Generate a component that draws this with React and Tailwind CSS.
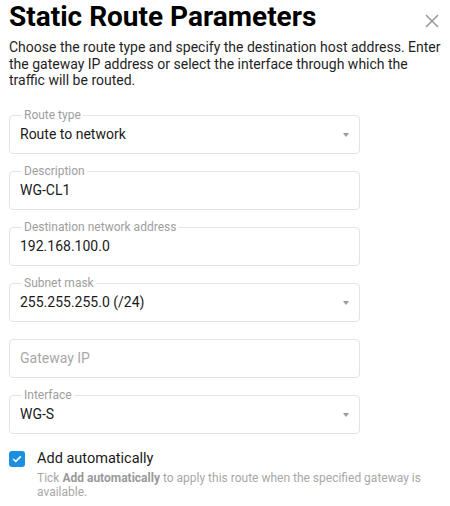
function Field({ label, value, placeholder, select }) {
  return (
    <div className="relative h-[39px] w-[351px] rounded-[4px] border border-[#e3e3e3] flex items-center pl-[10px] pr-[10px]">
      {label && (
        <span className="absolute left-[12px] top-[-9px] bg-white px-[2px] text-[12px] leading-[16px] text-[#9e9e9e]">
          {label}
        </span>
      )}
      {value ? (
        <span className="flex-1 text-[14px] text-[#1a1a1a]">{value}</span>
      ) : (
        <span className="flex-1 text-[14px] text-[#a8a8a8]">{placeholder}</span>
      )}
      {select && (
        <svg width="6" height="4" viewBox="0 0 6 4" className="mt-[1px]">
          <path d="M0 0 H6 L3 4 Z" fill="#9a9a9a" />
        </svg>
      )}
    </div>
  );
}

export default function App() {
  return (
    <div className="w-[450px] h-[506px] bg-white px-[9px] pt-[1px] font-['Roboto',sans-serif]">
      {/* Header */}
      <div className="flex items-start justify-between">
        <h1 className="text-[28px] font-bold leading-[32px] text-black">Static Route Parameters</h1>
        <svg width="14" height="14" viewBox="0 0 14 14" className="mt-[13px] mr-[2px]">
          <path d="M1 1 L13 13 M13 1 L1 13" stroke="#9a9a9a" strokeWidth="1.6" />
        </svg>
      </div>

      <p className="mt-[6px] text-[14px] leading-[16.5px] text-[#1f1f1f]">
        Choose the route type and specify the destination host address. Enter the gateway IP address or select the interface through which the traffic will be routed.
      </p>

      {/* Fields */}
      <div className="mt-[26px] flex flex-col gap-[17px]">
        <Field label="Route type" value="Route to network" select />
        <Field label="Description" value="WG-CL1" />
        <Field label="Destination network address" value="192.168.100.0" />
        <Field label="Subnet mask" value="255.255.255.0 (/24)" select />
        <Field placeholder="Gateway IP" />
        <Field label="Interface" value="WG-S" select />
      </div>

      {/* Checkbox */}
      <div className="mt-[17px] flex items-start gap-[12px]">
        <div className="h-[16px] w-[16px] shrink-0 rounded-[3px] bg-[#1b8fe0] flex items-center justify-center">
          <svg width="10" height="8" viewBox="0 0 10 8">
            <path d="M1.2 4 L3.8 6.4 L8.8 1.4" fill="none" stroke="white" strokeWidth="1.5" />
          </svg>
        </div>
        <div>
          <div className="text-[14.5px] leading-[16px] text-[#1a1a1a]">Add automatically</div>
          <p className="mt-[4px] text-[12px] leading-[14px] text-[#a8a8a8]">
            Tick <b className="font-bold text-[#999]">Add automatically</b> to apply this route when the specified gateway is available.
          </p>
        </div>
      </div>
    </div>
  );
}
